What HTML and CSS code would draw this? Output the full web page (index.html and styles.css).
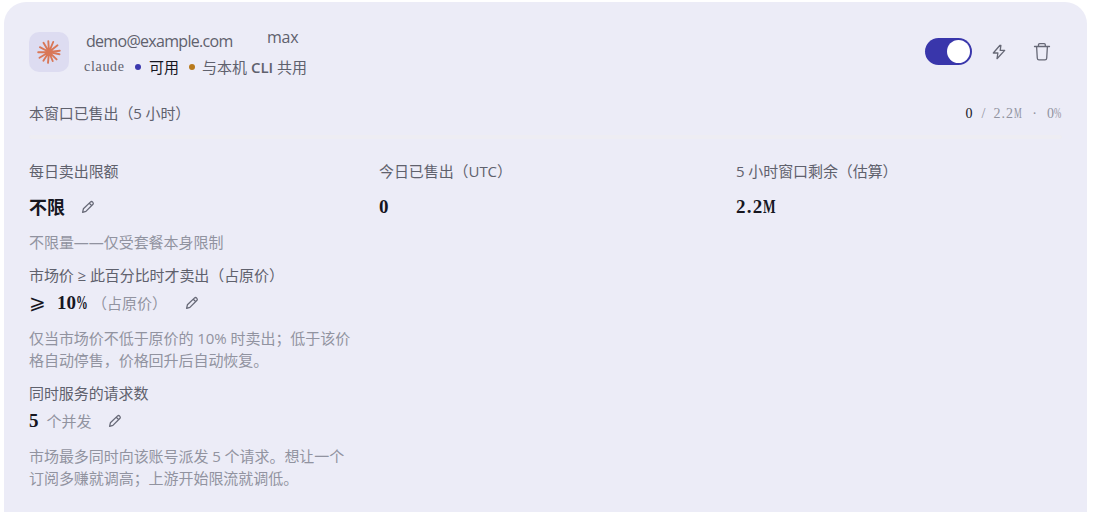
FILE: index.html
```
<!DOCTYPE html>
<html lang="zh-CN">
<head>
    <meta charset="UTF-8">
    <meta name="viewport" content="width=device-width, initial-scale=1.0">
    <title>账号</title>
    <link rel="stylesheet" href="styles.css">
</head>
<body>
    <svg class="symbols" aria-hidden="true">
        <symbol id="pencil" viewBox="0 0 16 16">
            <path d="M2.6 13.4 3.4 9.8 10.6 2.9Q11.6 2 12.7 3.1T13 5.3L5.9 12.4ZM9.3 4.2 11.7 6.6"/>
        </symbol>
    </svg>

    <div class="card">
        <!-- Account header -->
        <div class="card-header">
            <div class="logo">
                <svg width="24" height="24" viewBox="0 0 24 24">
                    <path d="M12 12 11.3 1.3M12 12 16.2 2M12 12 20.5 5.3M12 12 22.8 10.7M12 12 22.5 14.3M12 12 19.6 19.4M12 12 15.7 21M12 12 11 22.8M12 12 6.4 20.7M12 12 2.5 17.8M12 12 1.2 12.2M12 12 2.9 7.2M12 12 6.5 2.8"/>
                </svg>
            </div>
            <div class="account">
                <div class="account-name">
                    <span class="email">demo@example.com</span>
                    <span class="plan">max</span>
                </div>
                <div class="account-meta">
                    <span class="provider">claude</span>
                    <span class="dot dot-blue"></span>
                    <span class="status">可用</span>
                    <span class="dot dot-amber"></span>
                    <span class="shared">与本机 <b>CLI</b> 共用</span>
                </div>
            </div>
            <div class="actions">
                <button class="switch" aria-label="启用"><span class="knob"></span></button>
                <button class="icon-btn" aria-label="测试">
                    <svg width="16" height="16" viewBox="0 0 16 16"><path d="M9 1.3 2.3 9H6.9L6 14.7 13.7 6.4H9.2L9.9 1.3Z"/></svg>
                </button>
                <button class="icon-btn trash" aria-label="删除">
                    <svg width="18" height="20" viewBox="0 0 18 20"><path d="M1.5 4.5H16.5M5.5 4.5V2.8Q5.5 1.7 6.6 1.7H11.2Q12.3 1.7 12.3 2.8V4.5M3.6 4.5 4.3 16.2Q4.4 17.8 6 17.8H12Q13.6 17.8 13.7 16.2L14.4 4.5"/></svg>
                </button>
            </div>
        </div>

        <!-- Usage in the current window -->
        <div class="usage">
            <span class="label">本窗口已售出（5 小时）</span>
            <span class="usage-value"><b>0</b> <i>/</i> <span class="total">2.2<em>M</em></span> <i class="sep">·</i> 0<em class="pct">%</em></span>
        </div>
        <div class="bar"></div>

        <div class="stats">
            <div class="stat">
                <div class="label">每日卖出限额</div>
                <div class="value value-top">
                    <span class="cjk-strong">不限</span>
                    <svg class="pencil"><use href="#pencil"/></svg>
                </div>
                <p class="hint">不限量——仅受套餐本身限制</p>

                <div class="label">市场价 ≥ 此百分比时才卖出（占原价）</div>
                <div class="value">
                    <span class="gte">⩾</span>
                    <span class="num">10<em class="pct">%</em></span>
                    <span class="unit unit-price">（占原价）</span>
                    <svg class="pencil"><use href="#pencil"/></svg>
                </div>
                <p class="hint">仅当市场价不低于原价的 10% 时卖出；低于该价<br>格自动停售，价格回升后自动恢复。</p>

                <div class="label">同时服务的请求数</div>
                <div class="value">
                    <span class="num">5</span>
                    <span class="unit">个并发</span>
                    <svg class="pencil"><use href="#pencil"/></svg>
                </div>
                <p class="hint">市场最多同时向该账号派发 5 个请求。想让一个<br>订阅多赚就调高；上游开始限流就调低。</p>
            </div>
            <div class="stat">
                <div class="label">今日已售出（UTC）</div>
                <div class="value value-top"><span class="num">0</span></div>
            </div>
            <div class="stat">
                <div class="label">5 小时窗口剩余（估算）</div>
                <div class="value value-top"><span class="num million">2.2<em>M</em></span></div>
            </div>
        </div>
    </div>
</body>
</html>
```
FILE: styles.css
```
* {
    box-sizing: border-box;
}
body {
    margin: 0;
    background: #fff;
    color: #5f616d;
    font-family: "Open Sans", "Noto Sans CJK SC", sans-serif;
    font-size: 15px;
    line-height: 22px;
}
svg {
    display: block;
    fill: none;
    stroke: #666876;
    stroke-width: 1.3;
    stroke-linecap: round;
    stroke-linejoin: round;
}
em, i {
    font-style: normal;
}
.symbols {
    position: absolute;
    width: 0;
    height: 0;
}
.card {
    width: 1083px;
    height: 510px;
    margin: 2px 0 0 4px;
    padding: 26px 25px 0;
    border-radius: 22px 22px 0 0;
    background: #ececf7;
}

/* header */
.card-header {
    display: flex;
    height: 52px;
}
.logo {
    width: 40px;
    height: 40px;
    margin-top: 4px;
    padding: 8px;
    border-radius: 10px;
    background: #dddcf1;
}
.logo svg {
    stroke: #d97757;
    stroke-width: 1.9;
}
.account {
    margin-left: 15px;
}
.account-name {
    display: flex;
    gap: 33px;
    height: 28px;
    padding-left: 2px;
    font-size: 16px;
}
.email {
    width: 148px;
    margin-top: 2px;
    letter-spacing: -0.7px;
}
.plan {
    margin-top: -2px;
    letter-spacing: -0.2px;
}
.account-meta {
    display: flex;
    align-items: center;
    height: 22px;
}
.provider {
    width: 51px;
    font-family: "Liberation Serif", serif;
    font-size: 14px;
    letter-spacing: 0.7px;
}
.dot {
    width: 6px;
    height: 6px;
    border-radius: 50%;
}
.dot-blue {
    background: #3b38ae;
}
.dot-amber {
    background: #b97a1c;
}
.status {
    margin: 0 10px 0 8px;
    color: #16161f;
}
.shared {
    margin-left: 7px;
}
.shared b {
    font-weight: 600;
}
.actions {
    display: flex;
    align-items: center;
    height: 46px;
    margin-left: auto;
}
button {
    padding: 0;
    border: 0;
    background: none;
}
.switch {
    width: 47px;
    height: 27px;
    padding: 2px;
    border-radius: 14px;
    background: #3936ab;
}
.knob {
    display: block;
    width: 23px;
    height: 23px;
    margin-left: auto;
    border-radius: 50%;
    background: #fff;
}
.icon-btn {
    margin: 2px 0 0 19px;
}
.trash {
    margin: 2px 11px 0 26px;
}

/* usage row */
.usage {
    display: flex;
    justify-content: space-between;
    height: 22px;
    margin-top: 22px;
}
.usage .label {
    letter-spacing: -0.1px;
}
.usage-value {
    display: flex;
    padding-top: 1px;
    color: #9193a0;
    font-family: "Liberation Serif", serif;
    font-size: 14px;
}
.usage-value b {
    margin-right: 9px;
    color: #16161f;
    font-weight: normal;
}
.usage-value i {
    width: 12px;
}
.usage-value .total {
    display: flex;
    letter-spacing: 1px;
}
.usage-value .sep {
    width: 25px;
    text-align: center;
}
em {
    display: inline-block;
    width: 8px;
    transform: scaleX(0.62);
    transform-origin: left;
}
.bar {
    height: 4px;
    margin-top: 11px;
    border-radius: 2px;
    background: #eeedf3;
}

/* stats */
.stats {
    display: grid;
    grid-template-columns: 326px 333px 1fr;
    gap: 24px;
    margin-top: 21px;
}
.stat .label {
    letter-spacing: -0.08px;
}
.value {
    display: flex;
    align-items: center;
    height: 34px;
    margin-bottom: 7px;
    color: #16161f;
    font-size: 18px;
}
.value-top {
    height: 50px;
    margin-bottom: -1px;
}
.cjk-strong {
    font-weight: 600;
}
.num {
    font-family: "Liberation Serif", serif;
    font-weight: bold;
    font-size: 19px;
}
.num em {
    width: 11px;
    transform: scaleX(0.62);
}
.million {
    letter-spacing: 1.2px;
}
.million em {
    transform: scaleX(0.7);
}
.gte {
    width: 28px;
    margin-top: -3px;
    font-family: "DejaVu Sans", sans-serif;
    font-size: 20px;
}
.unit {
    margin-left: 8px;
    color: #9193a0;
    font-size: 15px;
}
.unit-price {
    margin-left: 5px;
}
.pencil {
    width: 16px;
    height: 16px;
    margin-left: 15px;
}
.unit-price + .pencil {
    margin-left: 17px;
}
.hint {
    margin: 0 0 11px;
    color: #9193a0;
    letter-spacing: -0.05px;
}
```
